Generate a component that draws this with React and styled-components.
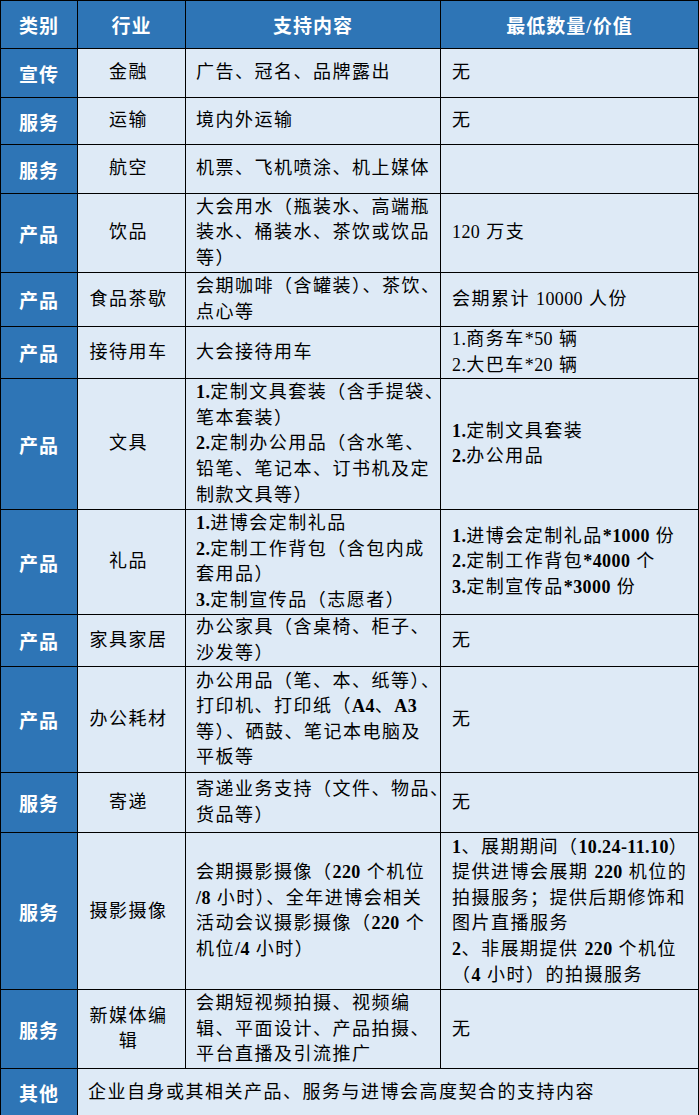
import React from 'react';
import styled, { createGlobalStyle } from 'styled-components';

const BLUE = '#2e75b6';
const PALE = '#deeaf6';

const Global = createGlobalStyle`
  html, body {
    margin: 0;
    padding: 0;
    background: #fff;
  }
  body {
    font-family: "Liberation Serif", "Noto Sans CJK SC", serif;
  }
`;

const Table = styled.table`
  width: 698px;
  table-layout: fixed;
  border-collapse: collapse;
  font-size: 18px;
  color: #000;
`;

const Cell = styled.td`
  height: ${(p) => p.$h || 48}px;
  padding: 0 6px 0 ${(p) => (p.$pad != null ? p.$pad : 10)}px;
  border: 1px solid #000;
  background: ${PALE};
  line-height: 25.6px;
  letter-spacing: 1.5px;
  white-space: nowrap;
  vertical-align: middle;
  text-align: ${(p) => (p.$center ? 'center' : 'left')};
  box-sizing: border-box;
`;

const Head = styled.th`
  height: 48px;
  padding: 0;
  border: 1px solid #000;
  background: ${BLUE};
  color: #fff;
  font-weight: bold;
  font-size: 19px;
  letter-spacing: 1px;
  text-align: center;
  vertical-align: middle;
  box-sizing: border-box;
`;

const Kind = styled.td`
  padding: 0;
  border: 1px solid #000;
  background: ${BLUE};
  color: #fff;
  font-weight: bold;
  font-size: 19px;
  letter-spacing: 1px;
  text-align: center;
  vertical-align: middle;
`;

const B = styled.b`
  letter-spacing: 0.4px;
`;

const Num = styled.span`
  letter-spacing: 0.4px;
`;

const Lines = ({ items }) =>
  items.map((line, i) => (
    <React.Fragment key={i}>
      {i > 0 && <br />}
      {line}
    </React.Fragment>
  ));

const rows = [
  { kind: '宣传', h: 49, trade: ['金融'], content: ['广告、冠名、品牌露出'], min: ['无'] },
  { kind: '服务', h: 47, trade: ['运输'], content: ['境内外运输'], min: ['无'] },
  { kind: '服务', h: 49, trade: ['航空'], content: ['机票、飞机喷涂、机上媒体'], min: [''] },
  {
    kind: '产品',
    h: 79,
    trade: ['饮品'],
    content: ['大会用水（瓶装水、高端瓶', '装水、桶装水、茶饮或饮品', '等）'],
    min: [<><Num>120</Num> 万支</>],
  },
  {
    kind: '产品',
    h: 54,
    trade: ['食品茶歇'],
    content: ['会期咖啡（含罐装）、茶饮、', '点心等'],
    min: [<>会期累计 <Num>10000</Num> 人份</>],
  },
  {
    kind: '产品',
    h: 52,
    trade: ['接待用车'],
    content: ['大会接待用车'],
    min: [<><Num>1.</Num>商务车<Num>*50</Num> 辆</>, <><Num>2.</Num>大巴车<Num>*20</Num> 辆</>],
  },
  {
    kind: '产品',
    h: 131,
    trade: ['文具'],
    content: [
      <><B>1.</B>定制文具套装（含手提袋、</>,
      '笔本套装）',
      <><B>2.</B>定制办公用品（含水笔、</>,
      '铅笔、笔记本、订书机及定',
      '制款文具等）',
    ],
    min: [<><B>1.</B>定制文具套装</>, <><B>2.</B>办公用品</>],
  },
  {
    kind: '产品',
    h: 105,
    trade: ['礼品'],
    content: [
      <><B>1.</B>进博会定制礼品</>,
      <><B>2.</B>定制工作背包（含包内成</>,
      '套用品）',
      <><B>3.</B>定制宣传品（志愿者）</>,
    ],
    min: [
      <><B>1.</B>进博会定制礼品<B>*1000</B> 份</>,
      <><B>2.</B>定制工作背包<B>*4000</B> 个</>,
      <><B>3.</B>定制宣传品<B>*3000</B> 份</>,
    ],
  },
  {
    kind: '产品',
    h: 52,
    trade: ['家具家居'],
    content: ['办公家具（含桌椅、柜子、', '沙发等）'],
    min: ['无'],
  },
  {
    kind: '产品',
    h: 106,
    trade: ['办公耗材'],
    content: [
      '办公用品（笔、本、纸等）、',
      <>打印机、打印纸（<B>A4</B>、<B>A3</B></>,
      '等）、硒鼓、笔记本电脑及',
      '平板等',
    ],
    min: ['无'],
  },
  {
    kind: '服务',
    h: 60,
    trade: ['寄递'],
    content: ['寄递业务支持（文件、物品、', '货品等）'],
    min: ['无'],
  },
  {
    kind: '服务',
    h: 157,
    trade: ['摄影摄像'],
    content: [
      <>会期摄影摄像（<B>220</B> 个机位</>,
      <><B>/8</B> 小时）、全年进博会相关</>,
      <>活动会议摄影摄像（<B>220</B> 个</>,
      <>机位<B>/4</B> 小时）</>,
    ],
    min: [
      <><B>1</B>、展期期间（<B>10.24-11.10</B>）</>,
      <>提供进博会展期 <B>220</B> 机位的</>,
      '拍摄服务；提供后期修饰和',
      '图片直播服务',
      <><B>2</B>、非展期提供 <B>220</B> 个机位</>,
      <>（<B>4</B> 小时）的拍摄服务</>,
    ],
  },
  {
    kind: '服务',
    h: 79,
    trade: ['新媒体编', '辑'],
    content: ['会期短视频拍摄、视频编', '辑、平面设计、产品拍摄、', '平台直播及引流推广'],
    min: ['无'],
  },
];

export default function App() {
  return (
    <>
      <Global />
      <Table>
        <colgroup>
          <col style={{ width: 77 }} />
          <col style={{ width: 108 }} />
          <col style={{ width: 255 }} />
          <col style={{ width: 258 }} />
        </colgroup>
        <thead>
          <tr>
            <Head>类别</Head>
            <Head>行业</Head>
            <Head>支持内容</Head>
            <Head>最低数量/价值</Head>
          </tr>
        </thead>
        <tbody>
          {rows.map((r, i) => (
            <tr key={i}>
              <Kind>{r.kind}</Kind>
              <Cell $h={r.h} $center $pad={0}>
                <Lines items={r.trade} />
              </Cell>
              <Cell $h={r.h}>
                <Lines items={r.content} />
              </Cell>
              <Cell $h={r.h} $pad={11}>
                <Lines items={r.min} />
              </Cell>
            </tr>
          ))}
          <tr>
            <Kind>其他</Kind>
            <Cell $h={48} colSpan={3}>
              企业自身或其相关产品、服务与进博会高度契合的支持内容
            </Cell>
          </tr>
        </tbody>
      </Table>
    </>
  );
}
